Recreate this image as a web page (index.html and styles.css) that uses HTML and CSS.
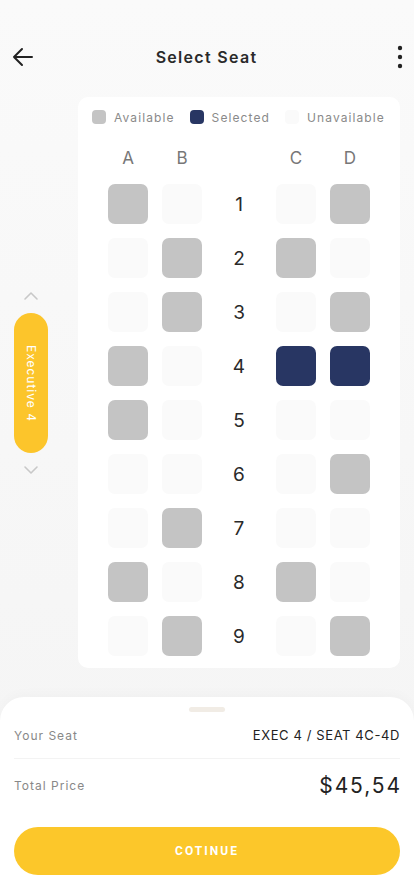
FILE: index.html
```html
<!DOCTYPE html>
<html>
<head>
<meta charset="utf-8">
<link rel="stylesheet" href="styles.css">
</head>
<body>
<div class="page">
  <header class="header">
    <svg class="back" width="24" height="24" viewBox="0 0 24 24"><path d="M21 12H3M11 4l-8 8 8 8" fill="none" stroke="#222" stroke-width="2" stroke-linecap="round" stroke-linejoin="round"/></svg>
    <h1 class="title">Select Seat</h1>
    <svg class="more" width="6" height="24" viewBox="0 0 6 24"><circle cx="3" cy="3" r="2.2" fill="#222"/><circle cx="3" cy="12" r="2.2" fill="#222"/><circle cx="3" cy="21" r="2.2" fill="#222"/></svg>
  </header>

  <main class="main">
    <aside class="cabins">
      <svg class="chev" width="16" height="10" viewBox="0 0 16 10"><path d="M2 8l6-6 6 6" fill="none" stroke="#c8c8c8" stroke-width="1.6" stroke-linecap="round" stroke-linejoin="round"/></svg>
      <div class="pill"><span>Executive 4</span></div>
      <svg class="chev" width="16" height="10" viewBox="0 0 16 10"><path d="M2 2l6 6 6-6" fill="none" stroke="#c8c8c8" stroke-width="1.6" stroke-linecap="round" stroke-linejoin="round"/></svg>
    </aside>

    <section class="card">
      <div class="legend">
        <div class="legend-item"><span class="dot avail"></span>Available</div>
        <div class="legend-item"><span class="dot sel"></span>Selected</div>
        <div class="legend-item"><span class="dot unav"></span>Unavailable</div>
      </div>
      <div class="grid">
        <div class="col">A</div><div class="col">B</div><div></div><div class="col">C</div><div class="col">D</div>

        <div class="seat avail"></div><div class="seat unav"></div><div class="num">1</div><div class="seat unav"></div><div class="seat avail"></div>
        <div class="seat unav"></div><div class="seat avail"></div><div class="num">2</div><div class="seat avail"></div><div class="seat unav"></div>
        <div class="seat unav"></div><div class="seat avail"></div><div class="num">3</div><div class="seat unav"></div><div class="seat avail"></div>
        <div class="seat avail"></div><div class="seat unav"></div><div class="num">4</div><div class="seat sel"></div><div class="seat sel"></div>
        <div class="seat avail"></div><div class="seat unav"></div><div class="num">5</div><div class="seat unav"></div><div class="seat unav"></div>
        <div class="seat unav"></div><div class="seat unav"></div><div class="num">6</div><div class="seat unav"></div><div class="seat avail"></div>
        <div class="seat unav"></div><div class="seat avail"></div><div class="num">7</div><div class="seat unav"></div><div class="seat unav"></div>
        <div class="seat avail"></div><div class="seat unav"></div><div class="num">8</div><div class="seat avail"></div><div class="seat unav"></div>
        <div class="seat unav"></div><div class="seat avail"></div><div class="num">9</div><div class="seat unav"></div><div class="seat avail"></div>
      </div>
    </section>
  </main>

  <footer class="sheet">
    <div class="handle"></div>
    <div class="row first">
      <span class="label">Your Seat</span>
      <span class="value">EXEC 4 / SEAT 4C-4D</span>
    </div>
    <div class="divider"></div>
    <div class="row second">
      <span class="label">Total Price</span>
      <span class="price">$45,54</span>
    </div>
    <button class="btn">COTINUE</button>
  </footer>
</div>
</body>
</html>
```

FILE: styles.css
```css
* { box-sizing: border-box; }
html, body { margin: 0; padding: 0; }
body {
  background: #f7f7f7;
  font-family: Inter, "Noto Sans", sans-serif;
  color: #222;
  width: 414px;
  height: 896px;
  overflow: hidden;
}
.page {
  display: flex;
  flex-direction: column;
  height: 896px;
  background: linear-gradient(#fafafa, #f4f4f4);
}
.header {
  display: grid;
  grid-template-columns: 1fr auto 1fr;
  align-items: center;
  height: 56px;
  margin-top: 29px;
  padding: 0 12px 0 11px;
}
.back { display: block; }
.title {
  margin: 0;
  font-size: 16px;
  font-weight: 600;
  letter-spacing: 1.3px;
  color: #2a2a2a;
}
.more { display: block; justify-self: end; margin-right: -1px; }

.main {
  display: flex;
  margin-top: 12px;
}
.cabins {
  width: 78px;
  padding-left: 14px;
  padding-top: 194px;
  display: flex;
  flex-direction: column;
  align-items: flex-start;
}
.chev { display: block; margin-left: 9px; }
.pill {
  width: 34px;
  height: 140px;
  margin: 12px 0 12px;
  border-radius: 17px;
  background: #fcc52b;
  display: flex;
  align-items: center;
  justify-content: center;
}
.pill span {
  writing-mode: vertical-rl;
  color: #fff;
  font-size: 12px;
  letter-spacing: 1px;
  font-weight: 400;
}
.card {
  width: 322px;
  height: 571px;
  background: #fff;
  border-radius: 10px;
  padding: 11px 30px 0;
}
.legend {
  display: flex;
  align-items: center;
  margin-left: -16px;
  margin-right: -16px;
  height: 18px;
}
.legend-item {
  display: flex;
  align-items: center;
  font-size: 12px;
  letter-spacing: 1.1px;
  color: #8a8a8a;
  margin-right: 15px;
}
.legend-item:last-child { margin-right: 0; }
.dot {
  width: 14px;
  height: 14px;
  border-radius: 4px;
  margin-right: 8px;
}
.avail { background: #c4c4c4; }
.sel { background: #283663; }
.unav { background: #fafafa; }

.grid {
  display: grid;
  grid-template-columns: 40px 40px 46px 40px 40px;
  grid-template-rows: 32px;
  grid-auto-rows: 40px;
  column-gap: 14px;
  row-gap: 14px;
  margin-top: 12px;
}
.grid .col {
  display: flex;
  align-items: center;
  justify-content: center;
  font-size: 17px;
  color: #777;
  padding-top: 8px;
}
.seat { border-radius: 7px; }
.num {
  display: flex;
  align-items: center;
  justify-content: center;
  font-size: 19px;
  color: #2a2a2a;
}

.sheet {
  margin-top: auto;
  height: 199px;
  background: #fff;
  border-radius: 24px 24px 0 0;
  box-shadow: 0 -3px 12px rgba(0, 0, 0, 0.025);
  padding: 10px 14px 0;
  display: flex;
  flex-direction: column;
}
.handle {
  align-self: center;
  width: 36px;
  height: 5px;
  border-radius: 3px;
  background: #f1ece5;
}
.row {
  display: flex;
  justify-content: space-between;
  align-items: center;
  height: 30px;
}
.row.first { margin-top: 8px; }
.row.second { margin-top: 11px; }
.label {
  font-size: 12px;
  color: #888;
  letter-spacing: 1px;
}
.value {
  font-size: 13px;
  color: #222;
  letter-spacing: 0.6px;
}
.divider {
  height: 1px;
  background: #f3f3f3;
  margin-top: 8px;
}
.price {
  font-size: 21px;
  letter-spacing: 1.9px;
  color: #222;
  margin-right: -2px;
}
.btn {
  margin-top: 27px;
  height: 48px;
  border: none;
  border-radius: 24px;
  background: #fcc72a;
  color: #fff;
  font-family: Roboto, Inter, sans-serif;
  font-weight: 700;
  font-size: 12px;
  letter-spacing: 2px;
}
```
